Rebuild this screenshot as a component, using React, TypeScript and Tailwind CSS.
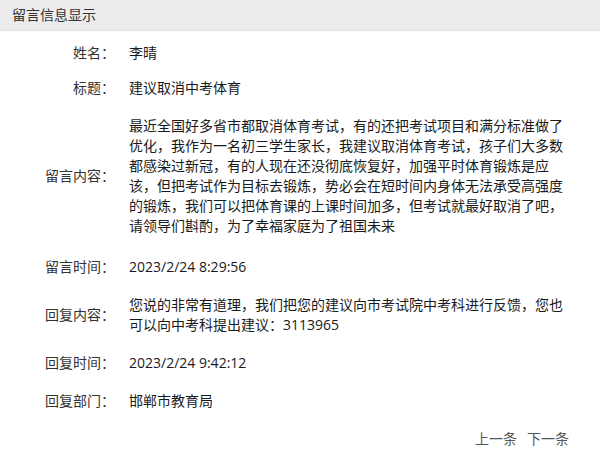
const font = { fontFamily: '"Microsoft YaHei", "Open Sans", "Noto Sans CJK SC", sans-serif' };

const rows: { label: string; value: string; className?: string }[] = [
  { label: "姓名：", value: "李晴" },
  { label: "标题：", value: "建议取消中考体育", className: "mt-[-3px]" },
  {
    label: "留言内容：",
    value:
      "最近全国好多省市都取消体育考试，有的还把考试项目和满分标准做了优化，我作为一名初三学生家长，我建议取消体育考试，孩子们大多数都感染过新冠，有的人现在还没彻底恢复好，加强平时体育锻炼是应该，但把考试作为目标去锻炼，势必会在短时间内身体无法承受高强度的锻炼，我们可以把体育课的上课时间加多，但考试就最好取消了吧，请领导们斟酌，为了幸福家庭为了祖国未来",
  },
  { label: "留言时间：", value: "2023/2/24 8:29:56", className: "mt-[3px]" },
  {
    label: "回复内容：",
    value: "您说的非常有道理，我们把您的建议向市考试院中考科进行反馈，您也可以向中考科提出建议：3113965",
  },
  { label: "回复时间：", value: "2023/2/24 9:42:12" },
  { label: "回复部门：", value: "邯郸市教育局" },
];

export default function App() {
  return (
    <div className="w-[600px] h-[461px] bg-white text-[14px] leading-[20px]" style={font}>
      <div className="h-[31px] bg-[#ececec] border-b border-[#e3e3e3] flex items-center px-[12px] text-[#333]">
        留言信息显示
      </div>

      <div className="flex flex-col gap-[18px] pt-[12px] pr-[31px]">
        {rows.map((r) => (
          <div key={r.label} className={`flex items-center ${r.className ?? ""}`}>
            <div className="w-[115px] shrink-0 text-right text-[#333]">{r.label}</div>
            <div className="ml-[14px] flex-1 text-[#1a1a1a]">{r.value}</div>
          </div>
        ))}

        <div className="flex justify-end gap-[10px] text-[#555]">
          <span className="cursor-pointer">上一条</span>
          <span className="cursor-pointer">下一条</span>
        </div>
      </div>
    </div>
  );
}
